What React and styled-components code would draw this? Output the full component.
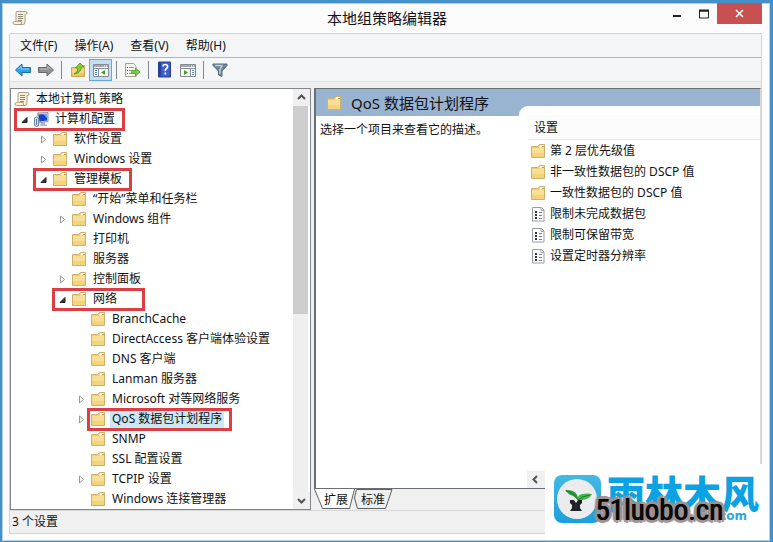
import { useState } from 'react';
import styled, { createGlobalStyle } from 'styled-components';

const GlobalStyle = createGlobalStyle`
  * {
    box-sizing: border-box;
  }

  body {
    margin: 0;
    font-family: 'Noto Sans', 'Noto Sans CJK SC', sans-serif;
    font-size: 12px;
    line-height: 20px;
    color: #111;
  }

  button {
    font: inherit;
    color: inherit;
    padding: 0;
    border: 0;
    background: none;
  }

  ul {
    list-style: none;
    margin: 0;
    padding: 0;
  }

  svg {
    display: block;
    flex: none;
  }
`;

const StyledWindow = styled.div`
  position: relative;
  display: flex;
  flex-direction: column;
  min-height: 100vh;
  border: 3px solid #4491ca;
  border-left-width: 2px;
  background-color: #fcfcfd;
  box-shadow: inset 0 0 0 1px #b5cfe4;
  padding: 0 8px 7px 7px;
`;

const TitleBar = styled.header`
  display: grid;
  grid-template-columns: 1fr auto 1fr;
  align-items: center;
  height: 30px;
  padding-left: 3px;
`;

const Title = styled.h1`
  margin: 0;
  font-size: 15px;
  font-weight: 400;
`;

const WindowButtons = styled.div`
  display: flex;
  justify-content: flex-end;
  align-self: start;
`;

const WindowButton = styled.button`
  display: flex;
  align-items: center;
  justify-content: center;
  width: ${(props) => (props.$close ? '45px' : '27px')};
  height: 21px;
  background-color: ${(props) => (props.$close ? '#c75050' : 'transparent')};
`;

const Frame = styled.div`
  flex: 1;
  display: flex;
  flex-direction: column;
  border: 1px solid #d2d3d5;
  background-color: #f0f0f0;
`;

const MenuBar = styled.nav`
  display: flex;
  gap: 17px;
  height: 24px;
  padding: 0 10px;
  background-color: #f4f5f7;
  border-bottom: 1px solid #b4b6b8;
`;

const MenuItem = styled.button`
  line-height: 23px;
`;

const Toolbar = styled.div`
  display: flex;
  align-items: center;
  height: 24px;
  padding-left: 1px;
  background-color: #f5f6f7;
  border-bottom: 1px solid #dfe0e1;
`;

const ToolButton = styled.button`
  display: flex;
  align-items: center;
  justify-content: center;
  width: 23px;
  height: 22px;
  border: 1px solid ${(props) => (props.$active ? '#65a7dc' : 'transparent')};
  background-color: ${(props) => (props.$active ? '#c3ddf3' : 'transparent')};
`;

const Divider = styled.span`
  width: 1px;
  height: 18px;
  margin: 0 4px;
  background-color: #85878a;
`;

const Panes = styled.main`
  flex: 1;
  display: grid;
  grid-template-columns: minmax(200px, 301px) 1fr;
  gap: 3px;
  padding-top: 6px;
`;

const TreePane = styled.section`
  display: flex;
  justify-content: space-between;
  border: 1px solid #82868c;
  background-color: #fff;
  padding-right: 2px;
`;

const TreeRow = styled.li`
  display: flex;
  height: 20px;
  padding-left: ${(props) =>
    props.$level === 0 ? '3px' : `${props.$level * 19 - 14}px`};
  white-space: nowrap;
`;

const Entry = styled.div`
  position: relative;
  display: flex;
  align-items: center;
`;

const Expander = styled.button`
  display: flex;
  align-items: center;
  justify-content: center;
  width: 17px;
  height: 20px;
`;

const ExpanderGap = styled.span`
  width: 17px;
`;

const EntryButton = styled.button`
  display: flex;
  align-items: center;
  gap: 4px;
  height: 20px;
`;

const EntryLabel = styled.span`
  padding: 0 2px;
  background-color: ${(props) => (props.$selected ? '#cbe8f6' : 'transparent')};
`;

const Highlight = styled.span`
  position: absolute;
  top: -1px;
  bottom: -2px;
  left: ${(props) => (props.$onIcon ? '14px' : '-2px')};
  right: ${(props) => (props.$wide ? '-26px' : '-8px')};
  border: 3px solid #db3e43;
  pointer-events: none;
`;

const ScrollBar = styled.div`
  display: flex;
  flex-direction: column;
  width: 15px;
  background-color: #efefef;
`;

const ScrollButton = styled.button`
  display: flex;
  align-items: center;
  justify-content: center;
  width: 17px;
  height: 17px;
  background-color: #f0f0f0;
`;

const ScrollTrack = styled.div`
  flex: 1;
`;

const ScrollThumb = styled.div`
  height: 54%;
  background-color: #cdcdcd;
`;

const RightSide = styled.div`
  display: flex;
  flex-direction: column;
  min-width: 0;
`;

const DetailPane = styled.section`
  flex: 1;
  display: grid;
  grid-template-columns: 203px 1fr;
  border: 1px solid #6a6f76;
  border-left-width: 2px;
  border-right-color: #d8d8d8;
  background-color: #fff;
`;

const DetailTitle = styled.h2`
  display: flex;
  align-items: center;
  gap: 9px;
  height: 27px;
  margin: 0;
  padding-left: 10px;
  font-size: 15px;
  font-weight: 400;
  background-color: #99b4d1;
`;

const Description = styled.p`
  margin: 0;
  padding: 4px;
`;

const ListColumn = styled.div`
  display: flex;
  flex-direction: column;
  padding-top: 17px;
  background: linear-gradient(#99b4d1 27px, #fff 27px);
`;

const ListSheet = styled.div`
  flex: 1;
  display: flex;
  flex-direction: column;
  border-top-left-radius: 9px;
  background-color: #fff;
`;

const ListHeader = styled.h3`
  height: 25px;
  margin: 9px 0 1px 9px;
  padding: 3px 6px;
  font-size: 12px;
  font-weight: 400;
  background-color: #fcfcfc;
  border-bottom: 1px solid #e3e8ee;
`;

const ListItem = styled.li`
  display: flex;
  height: 21px;
  padding-left: 11px;
`;

const BottomScroll = styled.div`
  margin-top: auto;
  margin-left: 8px;
  background-color: #f0f0f0;
`;

const Tabs = styled.div`
  display: flex;
  height: 21px;
`;

const Tab = styled.button`
  position: relative;
  width: ${(props) => (props.$active ? '41px' : '38px')};
  margin-right: -1px;
  padding-left: ${(props) => (props.$active ? '3px' : '0')};

  svg {
    position: absolute;
    inset: 0;
  }

  span {
    position: relative;
  }
`;

const StatusBar = styled.footer`
  height: 23px;
  padding: 0 2px;
  border-top: 1px solid #d7d7d7;
  line-height: 22px;
`;

const Badge = styled.aside`
  position: absolute;
  right: 1px;
  bottom: 1px;
  display: flex;
  align-items: flex-start;
  width: 224px;
  height: 76px;
  padding: 10px 8px;
  background-color: #fff;
`;

const BadgeText = styled.div`
  position: relative;
  margin-left: 6px;
`;

const BadgeName = styled.div`
  font-family: 'Noto Sans CJK SC', sans-serif;
  font-weight: 900;
  font-size: 38px;
  line-height: 36px;
  color: #0ba2e3;
  white-space: nowrap;
`;

const BadgeSite = styled.div`
  padding-right: 12px;
  font-family: 'DejaVu Sans', sans-serif;
  font-size: 12px;
  font-weight: 700;
  line-height: 12px;
  text-align: right;
  color: #2ba9df;
`;

const BadgeDomain = styled.div`
  position: absolute;
  left: -12px;
  top: 16px;
  font-family: 'Roboto Condensed', 'Noto Sans CJK SC', sans-serif;
  font-weight: 400;
  font-size: 29px;
  line-height: 40px;
  color: #0a0a0a;
  white-space: nowrap;
  text-shadow:
    1px 0 #0a0a0a,
    -2px -2px 1px #9c9192,
    3px -2px 1px #9c9192,
    -2px 2px 1px #9c9192,
    3px 2px 1px #9c9192,
    -3px 0 1px #9c9192,
    4px 0 1px #9c9192,
    0 -3px 1px #9c9192,
    0 3px 1px #9c9192;
`;

function FolderIcon() {
  return (
    <svg width="16" height="16" viewBox="0 0 16 16">
      <path d="M1.500 3.500h6.500l1.500-2h5v13h-13z" fill="#f2cf72" stroke="#cdb06a" />
      <path d="M2 5h7l1.500-1.500H14V14H2z" fill="#f9df95" />
      <path d="M2 10h12v4H2z" fill="#f5d27c" />
      <path d="M10 2.500h4M9.500 3.500h3" stroke="#fff7dc" />
      <path d="M12 3.500h2" stroke="#a99a5c" />
    </svg>
  );
}

function ScrollIcon() {
  return (
    <svg width="16" height="16" viewBox="0 0 16 16">
      <path
        d="M4.500 1.500h9q1.500 0 1.500 1.500t-1.500 1.500H13V12q0 2.500-2 2.500H2.500Q1 14.500 1 13t1.500-1.500H4V3z"
        fill="#f7f1dc"
        stroke="#a99e82"
      />
      <path d="M6 4.500h5M6 6.500h5M6 8.500h5M6 10.500h4" stroke="#8d8878" />
      <path d="M2.500 11.500h7V14" stroke="#c2ad72" fill="none" />
    </svg>
  );
}

function ComputerIcon() {
  return (
    <svg width="16" height="16" viewBox="0 0 16 16">
      <path d="M4.500 2l10.500-.5v9L6 12z" fill="#d5dbe6" stroke="#8b94a8" />
      <path d="M5.500 3.500l8.500-.5v6.500l-7.500 1z" fill="#1740c4" />
      <path d="M10 3.300l4-.3v4z" fill="#7ea6f1" />
      <path d="M8 12h4v1.500h2V15H7z" fill="#b3b9c4" />
      <path d="M1.500 7l2-1 2 1.500v7l-2 1-2-1z" fill="#d9e0e8" stroke="#73849b" />
      <path d="M3.500 8v6" stroke="#4d82b8" />
    </svg>
  );
}

function SettingIcon() {
  return (
    <svg width="16" height="16" viewBox="0 0 16 16">
      <path d="M2.500 1.500h9l2.500 2.500v11H2.500z" fill="#fdfdfd" stroke="#9a9da1" />
      <path d="M11 1.500V4.500h3" fill="none" stroke="#a5a7aa" />
      <path d="M5 5h2v2H5zM5 8h2v2H5zM5 11h2v2H5z" fill="#30343b" />
      <path d="M9 6.500h3M9 9.500h3M9 12.500h3" stroke="#6f7d98" />
    </svg>
  );
}

function ArrowIcon({ forward }) {
  return (
    <svg width="18" height="16" viewBox="0 0 18 16">
      <path
        d={
          forward
            ? 'M16.500 8L10 2v3.500H1.500v5H10V14z'
            : 'M1.500 8L8 2v3.500h8.500v5H8V14z'
        }
        fill={forward ? '#8f9193' : '#2ba0e4'}
        stroke={forward ? '#66696c' : '#1b6fae'}
      />
      <path
        d={forward ? 'M3 7h8V4.500l3 3' : 'M15 7H7V4.500l-3 3'}
        fill="none"
        stroke={forward ? '#b9bbbd' : '#83d2fb'}
      />
    </svg>
  );
}

function UpFolderIcon() {
  return (
    <svg width="16" height="16" viewBox="0 0 16 16">
      <path d="M1.500 5.500h6l1-2h6v11h-13z" fill="#f3d57d" stroke="#c7a65a" />
      <path d="M2 11h12v3H2z" fill="#edc766" />
      <path
        d="M4 12q4-1 4-6H5.500L10 1l4 4h-2.500Q11 11 4 12z"
        fill="#8bcb34"
        stroke="#5d9f22"
      />
    </svg>
  );
}

function PaneIcon({ right }) {
  return (
    <svg width="16" height="16" viewBox="0 0 16 16">
      <path d="M.5 2.500h15v12H.5z" fill="#fff" stroke="#858b91" />
      <path d="M1 3h14v2H1z" fill="#a1a8af" />
      <path d="M11 4h1M13 4h1" stroke="#fff" />
      <path d="M1 6.500h14" stroke="#858b91" />
      <path d={right ? 'M10.500 6v8' : 'M5.500 6v8'} stroke="#858b91" />
      <path
        d={
          right
            ? 'M12 8.500h2M12 10.500h2M12 12.500h2'
            : 'M2 8.500h2M2 10.500h2M2 12.500h2'
        }
        stroke="#4e8fc8"
      />
      <path d={right ? 'M4 8l4 2.500L4 13z' : 'M12 8l-4 2.500 4 2.500z'} fill="#43a321" />
    </svg>
  );
}

function ExportIcon() {
  return (
    <svg width="17" height="16" viewBox="0 0 17 16">
      <path d="M1.500 1.500h8l2.500 2.500v10.500H1.500z" fill="#fdfcf2" stroke="#a6a08b" />
      <path d="M3 5.500h1M3 8.500h1M3 11.500h1" stroke="#424a55" />
      <path d="M5 5.500h5M5 8.500h3M5 11.500h3" stroke="#9299a4" />
      <path d="M7.500 8.500h4V6l4.500 4-4.500 4v-2.500h-4z" fill="#70cf43" stroke="#3f9e24" strokeWidth=".7" />
    </svg>
  );
}

function HelpIcon() {
  return (
    <svg width="15" height="17" viewBox="0 0 15 17">
      <path d="M1.500 1h12v15h-12z" fill="#3c5fcb" stroke="#27408e" />
      <path d="M2 1.500h2v14H2z" fill="#263f9c" />
      <path
        d="M6 5.500Q6 3.500 8.300 3.500t2.300 2.200Q10.600 7 9.300 7.800T8.300 10M8.300 11.500v2"
        fill="none"
        stroke="#fff"
        strokeWidth="1.700"
      />
    </svg>
  );
}

function FilterIcon() {
  return (
    <svg width="16" height="16" viewBox="0 0 16 16">
      <path d="M1 2h14v1.500L10 9v5.500L6.500 13V9L1 3.500z" fill="#6e8596" stroke="#556b7b" />
      <path d="M3 3.500h7L8 8v4" fill="none" stroke="#bed0dc" strokeWidth="1.500" />
    </svg>
  );
}

function Chevron({ direction }) {
  const paths = {
    up: 'M2 7l3.500-3.500L9 7',
    down: 'M2 4l3.500 3.500L9 4',
    left: 'M7 2L3.500 5.500 7 9',
  };

  return (
    <svg width="11" height="11" viewBox="0 0 11 11">
      <path d={paths[direction]} fill="none" stroke="#505256" strokeWidth="2" />
    </svg>
  );
}

function SproutLogo() {
  return (
    <svg width="48" height="50" viewBox="0 0 48 50">
      <defs>
        <linearGradient id="tile" x1="0" y1="0" x2="0" y2="1">
          <stop offset="0" stopColor="#45b9e6" />
          <stop offset="1" stopColor="#1b9fdc" />
        </linearGradient>
      </defs>
      <rect x="1" y="1" width="47" height="48" rx="8" fill="url(#tile)" />
      <circle cx="24" cy="25" r="20" fill="#ebecee" />
      <path d="M12 16q13-1 13 10Q20 21 17 21z" fill="#2c9c3b" />
      <path d="M24 26q0-8 15-6-3 7-15 6z" fill="#45b649" />
      <path d="M13 17q7 1 12 9 4-4 12-5" fill="none" stroke="#1d7730" />
      <path d="M17 26h4l2 3 2-3h4v3l-2 2v3l2 3H17l2-3v-3l-2-2z" fill="#20242a" />
    </svg>
  );
}

const treeItems = [
  { level: 0, label: '本地计算机 策略', icon: 'scroll' },
  { level: 1, label: '计算机配置', icon: 'computer', open: true, marked: true },
  { level: 2, label: '软件设置', closed: true },
  { level: 2, label: 'Windows 设置', closed: true },
  { level: 2, label: '管理模板', open: true, marked: true },
  { level: 3, label: '“开始”菜单和任务栏' },
  { level: 3, label: 'Windows 组件', closed: true },
  { level: 3, label: '打印机' },
  { level: 3, label: '服务器' },
  { level: 3, label: '控制面板', closed: true },
  { level: 3, label: '网络', open: true, marked: true, wide: true },
  { level: 4, label: 'BranchCache' },
  { level: 4, label: 'DirectAccess 客户端体验设置' },
  { level: 4, label: 'DNS 客户端' },
  { level: 4, label: 'Lanman 服务器' },
  { level: 4, label: 'Microsoft 对等网络服务', closed: true },
  { level: 4, label: 'QoS 数据包计划程序', closed: true, marked: true, onIcon: true },
  { level: 4, label: 'SNMP' },
  { level: 4, label: 'SSL 配置设置' },
  { level: 4, label: 'TCPIP 设置', closed: true },
  { level: 4, label: 'Windows 连接管理器' },
];

const settings = [
  { label: '第 2 层优先级值', folder: true },
  { label: '非一致性数据包的 DSCP 值', folder: true },
  { label: '一致性数据包的 DSCP 值', folder: true },
  { label: '限制未完成数据包' },
  { label: '限制可保留带宽' },
  { label: '设置定时器分辨率' },
];

const menus = ['文件(F)', '操作(A)', '查看(V)', '帮助(H)'];

function ItemIcon({ icon }) {
  if (icon === 'scroll') return <ScrollIcon />;
  if (icon === 'computer') return <ComputerIcon />;
  return <FolderIcon />;
}

function TreeItem({ item, selected, onSelect }) {
  const { level, label, icon, open, closed, marked, wide, onIcon } = item;

  return (
    <TreeRow $level={level}>
      <Entry>
        {(open || closed) && (
          <Expander aria-label={label} aria-expanded={!!open}>
            <svg width="9" height="9" viewBox="0 0 9 9">
              {open ? (
                <path d="M7 2.500V7.500H2z" fill="#333" stroke="#222" />
              ) : (
                <path d="M2.500 1l4 3.500-4 3.500z" fill="#fff" stroke="#999" />
              )}
            </svg>
          </Expander>
        )}
        {level > 0 && !open && !closed && <ExpanderGap />}
        <EntryButton onClick={() => onSelect(label)}>
          <ItemIcon icon={icon} />
          <EntryLabel $selected={selected}>{label}</EntryLabel>
        </EntryButton>
        {marked && <Highlight $wide={wide} $onIcon={onIcon} />}
      </Entry>
    </TreeRow>
  );
}

function App() {
  const [selected, setSelected] = useState('QoS 数据包计划程序');
  const [tab, setTab] = useState('扩展');

  return (
    <>
      <GlobalStyle />
      <StyledWindow>
        <TitleBar>
          <ScrollIcon />
          <Title>本地组策略编辑器</Title>
          <WindowButtons>
            <WindowButton aria-label="最小化">
              <svg width="10" height="10" viewBox="0 0 10 10">
                <path d="M1 7h8" stroke="#222" strokeWidth="2" />
              </svg>
            </WindowButton>
            <WindowButton aria-label="最大化">
              <svg width="10" height="10" viewBox="0 0 10 10">
                <path d="M.5 1v8h9V1M0 2h10" fill="none" stroke="#222" />
                <path d="M0 1.500h10" stroke="#222" strokeWidth="2" />
              </svg>
            </WindowButton>
            <WindowButton $close aria-label="关闭">
              <svg width="9" height="9" viewBox="0 0 9 9">
                <path d="M1 1l7 7M8 1L1 8" stroke="#fff" strokeWidth="1.600" />
              </svg>
            </WindowButton>
          </WindowButtons>
        </TitleBar>

        <Frame>
          <MenuBar>
            {menus.map((menu) => (
              <MenuItem key={menu}>{menu}</MenuItem>
            ))}
          </MenuBar>
          <Toolbar>
            <ToolButton aria-label="后退">
              <ArrowIcon />
            </ToolButton>
            <ToolButton aria-label="前进">
              <ArrowIcon forward />
            </ToolButton>
            <Divider />
            <ToolButton aria-label="上一级">
              <UpFolderIcon />
            </ToolButton>
            <ToolButton $active aria-label="显示控制台树">
              <PaneIcon />
            </ToolButton>
            <Divider />
            <ToolButton aria-label="导出列表">
              <ExportIcon />
            </ToolButton>
            <Divider />
            <ToolButton aria-label="帮助">
              <HelpIcon />
            </ToolButton>
            <ToolButton aria-label="显示操作窗格">
              <PaneIcon right />
            </ToolButton>
            <Divider />
            <ToolButton aria-label="筛选器">
              <FilterIcon />
            </ToolButton>
          </Toolbar>

          <Panes>
            <TreePane>
              <ul>
                {treeItems.map((item) => (
                  <TreeItem
                    key={item.label}
                    item={item}
                    selected={item.label === selected}
                    onSelect={setSelected}
                  />
                ))}
              </ul>
              <ScrollBar>
                <ScrollButton aria-label="向上滚动">
                  <Chevron direction="up" />
                </ScrollButton>
                <ScrollTrack>
                  <ScrollThumb />
                </ScrollTrack>
                <ScrollButton aria-label="向下滚动">
                  <Chevron direction="down" />
                </ScrollButton>
              </ScrollBar>
            </TreePane>

            <RightSide>
              <DetailPane>
                <div>
                  <DetailTitle>
                    <FolderIcon />
                    QoS 数据包计划程序
                  </DetailTitle>
                  <Description>选择一个项目来查看它的描述。</Description>
                </div>
                <ListColumn>
                  <ListSheet>
                    <ListHeader>设置</ListHeader>
                    <ul>
                      {settings.map((setting) => (
                        <ListItem key={setting.label}>
                          <EntryButton>
                            {setting.folder ? <FolderIcon /> : <SettingIcon />}
                            {setting.label}
                          </EntryButton>
                        </ListItem>
                      ))}
                    </ul>
                    <BottomScroll>
                      <ScrollButton aria-label="向左滚动">
                        <Chevron direction="left" />
                      </ScrollButton>
                    </BottomScroll>
                  </ListSheet>
                </ListColumn>
              </DetailPane>
              <Tabs>
                <Tab $active onClick={() => setTab('扩展')} aria-pressed={tab === '扩展'}>
                  <svg width="41" height="21" viewBox="0 0 41 21">
                    <path d="M.5 0l8 19.500h27L40.500 0" fill="#fff" stroke="#5c5f63" />
                  </svg>
                  <span>扩展</span>
                </Tab>
                <Tab onClick={() => setTab('标准')} aria-pressed={tab === '标准'}>
                  <svg width="39" height="21" viewBox="0 0 39 21">
                    <path d="M2.500 .5L.5 9l3 10.500h28L38 .5z" fill="#efefef" stroke="#5c5f63" />
                  </svg>
                  <span>标准</span>
                </Tab>
              </Tabs>
            </RightSide>
          </Panes>

          <StatusBar>3 个设置</StatusBar>
        </Frame>

        <Badge>
          <SproutLogo />
          <BadgeText>
            <BadgeName>雨林木风</BadgeName>
            <BadgeSite>.com</BadgeSite>
            <BadgeDomain>51luobo.cn</BadgeDomain>
          </BadgeText>
        </Badge>
      </StyledWindow>
    </>
  );
}

export default App;
